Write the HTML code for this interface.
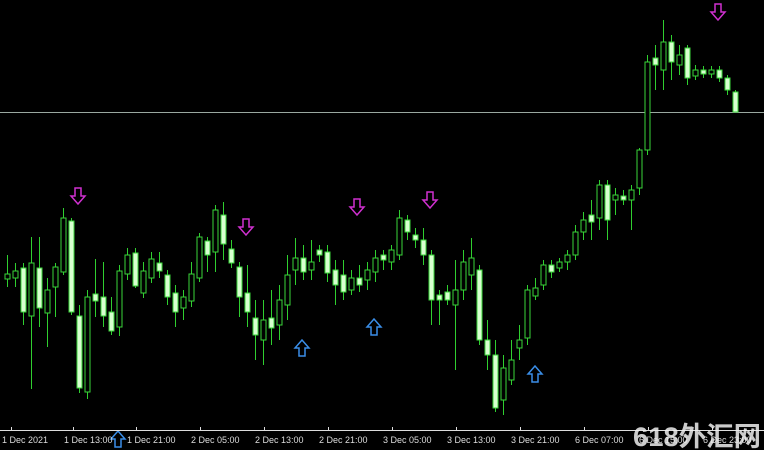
<!DOCTYPE html><html><head><meta charset="utf-8"><style>
html,body{margin:0;padding:0;background:#000;width:764px;height:459px;overflow:hidden}
svg{display:block}
text{font-family:"Liberation Sans","DejaVu Sans",sans-serif}
</style></head><body>
<svg id="s" width="764" height="459" xmlns="http://www.w3.org/2000/svg">
<rect width="764" height="459" fill="#000"/>
<line x1="0" y1="112.5" x2="764" y2="112.5" stroke="#9aa8a0" stroke-width="1"/>
<g id="c"></g>
<g id="a"></g>
<line x1="0" y1="430.5" x2="764" y2="430.5" stroke="#ddd" stroke-width="1"/>
<rect x="0" y="450" width="764" height="9" fill="#fff"/>
<g font-size="9" fill="#ddd" id="lab"></g>
<text x="633" y="446" font-size="27" font-weight="bold" fill="#eee" fill-opacity="0.85" textLength="128" lengthAdjust="spacingAndGlyphs" style="font-family:'Liberation Sans','Noto Sans CJK SC',sans-serif">618外汇网</text>
</svg>
<script>
var d=[[274,279,255,287,0],[271,278,263,287,0],[268,312,263,325,1],[263,316,237,389,0],[268,308,237,327,1],[290,313,278,347,0],[267,287,263,317,0],[218,272,208,275,0],[221,312,218,315,1],[316,388,305,393,1],[297,392,290,399,0],[294,301,259,317,1],[297,316,262,327,1],[312,331,297,335,1],[271,327,265,336,0],[255,274,248,280,0],[253,286,248,288,1],[271,293,262,298,0],[259,278,252,283,0],[263,271,252,278,1],[275,297,270,305,1],[293,312,285,327,1],[297,308,290,320,0],[274,301,262,307,0],[237,278,233,282,0],[241,255,237,272,1],[210,252,205,272,0],[215,244,202,260,1],[249,263,240,268,1],[267,297,262,317,1],[293,312,265,327,1],[318,335,300,360,1],[320,340,300,365,0],[318,328,290,345,1],[300,325,285,340,0],[275,305,255,320,0],[258,270,238,285,0],[258,272,245,280,1],[262,270,240,280,0],[250,255,245,262,1],[252,273,245,282,1],[270,285,260,305,1],[275,292,260,300,1],[278,290,270,295,0],[278,285,265,292,1],[270,280,262,290,0],[258,272,250,282,0],[255,260,250,270,1],[250,262,245,270,0],[218,255,210,260,0],[220,232,215,240,1],[235,240,228,248,1],[240,255,228,265,1],[255,300,250,325,1],[295,300,290,325,1],[292,300,285,305,1],[290,305,260,370,0],[262,290,250,300,0],[258,275,238,290,0],[270,340,265,345,1],[340,355,320,370,1],[355,408,340,412,1],[368,400,355,415,0],[360,380,340,385,0],[340,348,325,360,0],[290,338,285,345,0],[288,296,278,300,0],[265,285,260,290,0],[265,272,260,278,1],[262,268,258,272,0],[255,262,250,270,0],[232,255,225,260,0],[220,232,212,240,0],[215,222,200,240,1],[185,218,180,230,0],[185,220,180,240,1],[195,200,188,215,0],[196,200,190,205,1],[190,200,185,230,0],[150,188,148,195,0],[62,150,55,155,0],[58,65,45,90,1],[42,70,20,90,0],[42,62,35,80,1],[55,65,45,75,0],[48,78,45,85,1],[70,76,65,80,0],[70,74,66,78,1],[70,74,66,78,0],[70,78,66,82,1],[78,90,75,95,1],[92,112,90,112,1]];
var h='';d.forEach(function(c,i){var x=Math.round(6.7+8*i);
h+='<line x1="'+(x+.5)+'" y1="'+c[2]+'" x2="'+(x+.5)+'" y2="'+c[3]+'" stroke="#2fcf2f"/>';
h+='<rect x="'+(x-2)+'" y="'+c[0]+'" width="5" height="'+Math.max(1,c[1]-c[0])+'" fill="'+(c[4]?'#d8ffd0':'#000')+'" stroke="#3ad63a" stroke-width="1"/>';});
h+='<line x1="-0.5" y1="255" x2="-0.5" y2="290" stroke="#2fcf2f"/>';
document.getElementById('c').innerHTML=h;
var a='';function dn(x,y,col){a+='<path d="M'+(x-3)+' '+(y-9)+'h6v8h4l-7 8l-7-8h4z" fill="none" stroke="'+col+'" stroke-width="1.5"/>';}
function up(x,y,col){a+='<path d="M'+(x-3)+' '+(y+9)+'h6v-8h4l-7-8l-7 8h4z" fill="none" stroke="'+col+'" stroke-width="1.5"/>';}
var m='#d030d0',b='#3a8ee8';dn(78,197,m);dn(246,228,m);dn(357,208,m);dn(430,201,m);dn(718,13,m);
up(302,347,b);up(374,326,b);up(535,373,b);up(118,438,b);
document.getElementById('a').innerHTML=a;
var L=[[0,'1 Dec 2021'],[62,'1 Dec 13:00'],[125,'1 Dec 21:00'],[189,'2 Dec 05:00'],[253,'2 Dec 13:00'],[317,'2 Dec 21:00'],[381,'3 Dec 05:00'],[445,'3 Dec 13:00'],[509,'3 Dec 21:00'],[573,'6 Dec 07:00'],[637,'6 Dec 15:00'],[701,'6 Dec 23:00']];
var t='';L.forEach(function(l){t+='<text x="'+(l[0]+2)+'" y="443">'+l[1]+'</text><line x1="'+(l[0]+11.5)+'" y1="427" x2="'+(l[0]+11.5)+'" y2="431" stroke="#ddd"/>';});
document.getElementById('lab').innerHTML=t;
</script>
</body></html>
